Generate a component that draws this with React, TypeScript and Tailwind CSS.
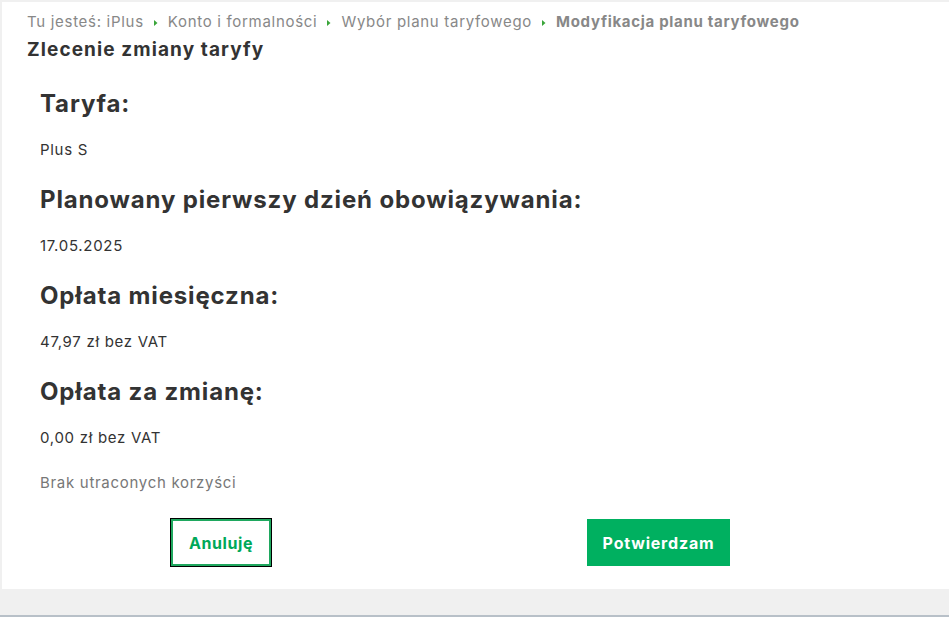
const font = { fontFamily: "Inter, 'Open Sans', sans-serif" };

function Crumb({ label }: { label: string }) {
  return (
    <>
      <span>{label}</span>
      <svg width="6" height="8" viewBox="0 0 6 8" className="mx-[9px] inline-block">
        <path d="M1 1 L4.5 4 L1 7 Z" fill="#3aa53a" />
      </svg>
    </>
  );
}

function Section({ title, value }: { title: string; value: string }) {
  return (
    <div className="mb-[25px]">
      <h2 className="text-[24px] font-bold leading-[30px] tracking-[0.85px] text-[#333333]">{title}</h2>
      <p className="mt-[21px] text-[15px] leading-[20px] tracking-[0.7px] text-[#333333]">{value}</p>
    </div>
  );
}

export default function App() {
  return (
    <div className="flex h-[617px] w-[949px] flex-col bg-[#f0f0f0]" style={font}>
      <div className="ml-[2px] mt-[2px] flex h-[587px] flex-col bg-white">
        <div className="px-[25px] pt-[10px]">
          <p className="text-[15px] leading-[20px] tracking-[0.7px] text-[#888888]">
            <Crumb label="Tu jesteś: iPlus" />
            <Crumb label="Konto i formalności" />
            <Crumb label="Wybór planu taryfowego" />
            <span className="font-bold">Modyfikacja planu taryfowego</span>
          </p>
          <h1 className="mt-[6px] text-[19px] font-bold leading-[24px] tracking-[1.1px] text-[#333333]">
            Zlecenie zmiany taryfy
          </h1>
        </div>
        <div className="px-[38px] pt-[27px]">
          <Section title="Taryfa:" value="Plus S" />
          <Section title="Planowany pierwszy dzień obowiązywania:" value="17.05.2025" />
          <Section title="Opłata miesięczna:" value="47,97 zł bez VAT" />
          <Section title="Opłata za zmianę:" value="0,00 zł bez VAT" />
          <p className="mt-[4px] text-[15px] leading-[20px] tracking-[0.7px] text-[#777777]">Brak utraconych korzyści</p>
        </div>
        <div className="mt-[25px] flex">
          <div className="ml-[168px] border border-black">
            <button className="flex h-[47px] w-[100px] items-center justify-center border-2 border-[#1fa85f] bg-white text-[16px] font-bold tracking-[0.6px] text-[#00a859]">
              Anuluję
            </button>
          </div>
          <button className="ml-[315px] mt-[1px] flex h-[47px] w-[143px] items-center justify-center bg-[#00b060] text-[16px] font-bold tracking-[0.8px] text-white">
            Potwierdzam
          </button>
        </div>
      </div>
      <div className="mt-auto h-[2px] bg-[#b8c0c8]" />
    </div>
  );
}
